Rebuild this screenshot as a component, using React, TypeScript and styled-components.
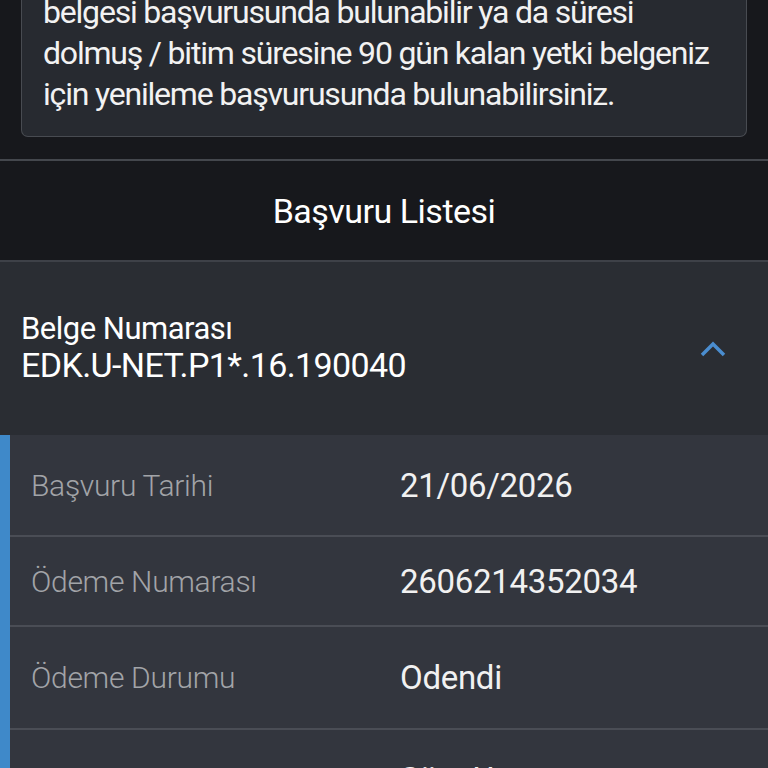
import styled, { createGlobalStyle } from "styled-components";

const rows = [
    { label: "Başvuru Tarihi", value: "21/06/2026", height: 102 },
    { label: "Ödeme Numarası", value: "2606214352034", height: 90 },
    { label: "Ödeme Durumu", value: "Odendi", height: 103 },
    { label: "Başvuru Tipi", value: "Süre Uzatımı", height: 100 },
];

export default function App() {
    return (
        <Page>
            <GlobalStyle />
            <InfoBox>
                belgesi başvurusunda bulunabilir ya da süresi
                <br />
                dolmuş / bitim süresine 90 gün kalan yetki belgeniz
                <br />
                için yenileme başvurusunda bulunabilirsiniz.
            </InfoBox>

            <ListHeader>Başvuru Listesi</ListHeader>

            <AccordionHeader>
                <Titles>
                    <DocLabel>Belge Numarası</DocLabel>
                    <DocNumber>EDK.U-NET.P1*.16.190040</DocNumber>
                </Titles>
                <Chevron width="26" height="16" viewBox="0 0 26 16">
                    <polyline points="2,14 13,3 24,14" />
                </Chevron>
            </AccordionHeader>

            <Details>
                <AccentBar />
                <RowList>
                    {rows.map((row) => (
                        <Row key={row.label} $height={row.height}>
                            <Label>{row.label}</Label>
                            <Value>{row.value}</Value>
                        </Row>
                    ))}
                </RowList>
            </Details>
        </Page>
    );
}

const GlobalStyle = createGlobalStyle`
    body {
        margin: 0;
        background: #17181c;
        font-family: Roboto, "Noto Sans", sans-serif;
        overflow: hidden;
    }
`;

const Page = styled.div`
    display: flex;
    flex-direction: column;
    background: #17181c;
    min-height: 768px;
`;

const InfoBox = styled.div`
    margin: -30px 21px 0;
    padding: 22px 10px 21px 21px;
    background: #272a30;
    border: 1px solid #484b51;
    border-top: none;
    border-radius: 0 0 7px 7px;
    color: #f2f2f2;
    font-size: 32px;
    letter-spacing: -1.2px;
    line-height: 41px;
    white-space: nowrap;
    overflow: hidden;
`;

const ListHeader = styled.div`
    margin-top: 22px;
    height: 99px;
    display: flex;
    align-items: center;
    justify-content: center;
    border-top: 2px solid #44474d;
    border-bottom: 2px solid #3e4148;
    color: #ffffff;
    font-size: 34px;
    letter-spacing: -0.5px;
`;

const AccordionHeader = styled.div`
    height: 173px;
    box-sizing: border-box;
    padding: 0 42px 0 21px;
    display: flex;
    align-items: center;
    justify-content: space-between;
    background: #2a2d33;
`;

const Titles = styled.div`
    display: flex;
    flex-direction: column;
    gap: 1px;
    color: #ffffff;
    line-height: 1.1;
`;

const DocLabel = styled.span`
    font-size: 31px;
    letter-spacing: -0.5px;
`;

const DocNumber = styled.span`
    font-size: 34px;
    letter-spacing: -0.6px;
`;

const Chevron = styled.svg`
    fill: none;
    stroke: #4a8dcf;
    stroke-width: 3.5;
`;

const Details = styled.div`
    display: flex;
    background: #33363e;
`;

const AccentBar = styled.div`
    width: 10px;
    flex-shrink: 0;
    background: #3f89c9;
`;

const RowList = styled.div`
    flex: 1;
    display: flex;
    flex-direction: column;
`;

const Row = styled.div<{ $height: number }>`
    height: ${({ $height }) => $height}px;
    box-sizing: border-box;
    display: grid;
    grid-template-columns: 369px 1fr;
    align-items: center;
    padding-left: 21px;
    border-bottom: 2px solid #4a4d55;
`;

const Label = styled.span`
    color: #a2a4a8;
    font-size: 30px;
    letter-spacing: -0.3px;
    font-weight: 300;
`;

const Value = styled.span`
    color: #f1f1f1;
    font-size: 33px;
    letter-spacing: -0.3px;
`;
